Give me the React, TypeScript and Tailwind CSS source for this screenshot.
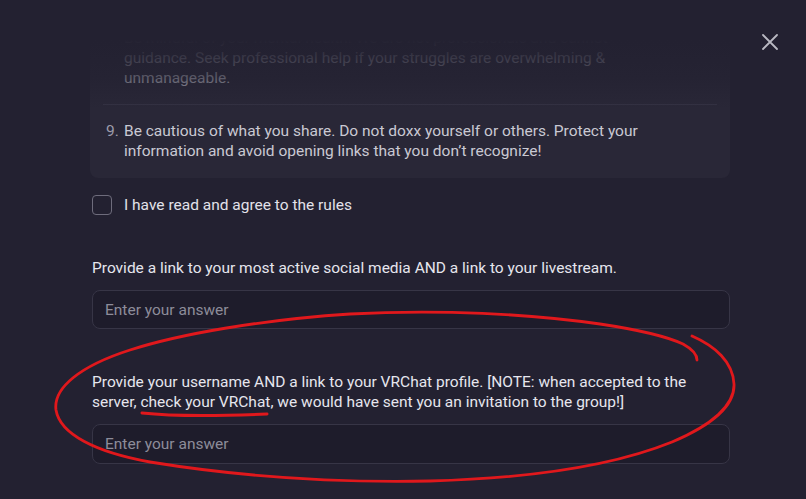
import React from "react";

export default function App() {
  const font = { fontFamily: "Roboto, 'Liberation Sans', sans-serif" };
  return (
    <div
      className="relative w-[806px] h-[499px] overflow-hidden bg-[#232131] text-[15.5px] leading-[20px]"
      style={font}
    >
      <button className="absolute left-[761px] top-[33px] w-[18px] h-[18px] flex items-center justify-center">
        <svg width="18" height="18" viewBox="0 0 18 18" fill="none">
          <path d="M2 2L16 16M16 2L2 16" stroke="#b9b9c2" strokeWidth="1.8" strokeLinecap="round" />
        </svg>
      </button>

      <div className="flex flex-col pl-[90px] w-[730px]">
        {/* rules box */}
        <div className="relative rounded-b-[8px] bg-[#292737] px-[13px] pt-[28px]">
          <div className="flex pb-[16px] border-b border-[#343243]">
            <div className="w-[21px] shrink-0" />
            <div className="text-[#c5c5cf] pr-[30px]">
              <div>Be mindful of your mental health. We are not professionals and cannot</div>
              <div>guidance. Seek professional help if your struggles are overwhelming &amp;</div>
              <div>unmanageable.</div>
            </div>
          </div>
          <div className="flex pt-[16px] pb-[17px]">
            <div className="w-[21px] shrink-0 pl-[3px] text-[#9d9cab]">9.</div>
            <div className="text-[#c9c9d3] pr-[40px]">
              Be cautious of what you share. Do not doxx yourself or others. Protect your information and avoid opening links that you don’t recognize!
            </div>
          </div>
          <div className="absolute left-0 right-0 top-0 h-[112px] bg-[linear-gradient(to_bottom,#232131_40px,rgba(35,33,49,0.86)_58px,rgba(35,33,49,0.66)_78px,rgba(35,33,49,0)_108px)]" />
        </div>

        {/* checkbox */}
        <div className="flex items-center gap-[12px] mt-[17px] pl-[2px]">
          <div className="w-[20px] h-[20px] rounded-[4px] border border-[#6e6c7c]" />
          <span className="text-[#e2e2ea]">I have read and agree to the rules</span>
        </div>

        {/* question 1 */}
        <div className="mt-[43px] pl-[2px] text-[#e6e6ee]">
          Provide a link to your most active social media AND a link to your livestream.
        </div>
        <div className="mt-[12px] ml-[2px] h-[39px] rounded-[8px] border border-[#373546] bg-[#1e1c2b] flex items-center px-[12px] text-[#8d8c9a]">
          Enter your answer
        </div>

        {/* question 2 */}
        <div className="mt-[43px] pl-[2px] pr-[20px] text-[#e6e6ee]">
          Provide your username AND a link to your VRChat profile. [NOTE: when accepted to the server, check your VRChat, we would have sent you an invitation to the group!]
        </div>
        <div className="mt-[12px] ml-[2px] h-[40px] rounded-[8px] border border-[#373546] bg-[#1e1c2b] flex items-center px-[12px] text-[#8d8c9a]">
          Enter your answer
        </div>
      </div>

      {/* red annotations */}
      <svg className="absolute left-0 top-0 pointer-events-none" width="806" height="499" viewBox="0 0 806 499" fill="none">
        <path
          d="M692 336 C715 346 733 362 734 384 C735 405 712 425 672 442 C620 463 540 478 430 481 C330 483 230 475 150 462 C95 452 60 434 56 410 C53 388 80 366 130 350 C180 334 260 320 350 314 C440 309 530 314 600 324 C640 330 670 338 683 344 C692 349 697 355 697 360"
          stroke="#e0181c"
          strokeWidth="2.8"
          strokeLinecap="round"
          strokeLinejoin="round"
        />
        <path
          d="M142 413 C170 416 220 416 267 414"
          stroke="#e0181c"
          strokeWidth="3"
          strokeLinecap="round"
        />
      </svg>
    </div>
  );
}
